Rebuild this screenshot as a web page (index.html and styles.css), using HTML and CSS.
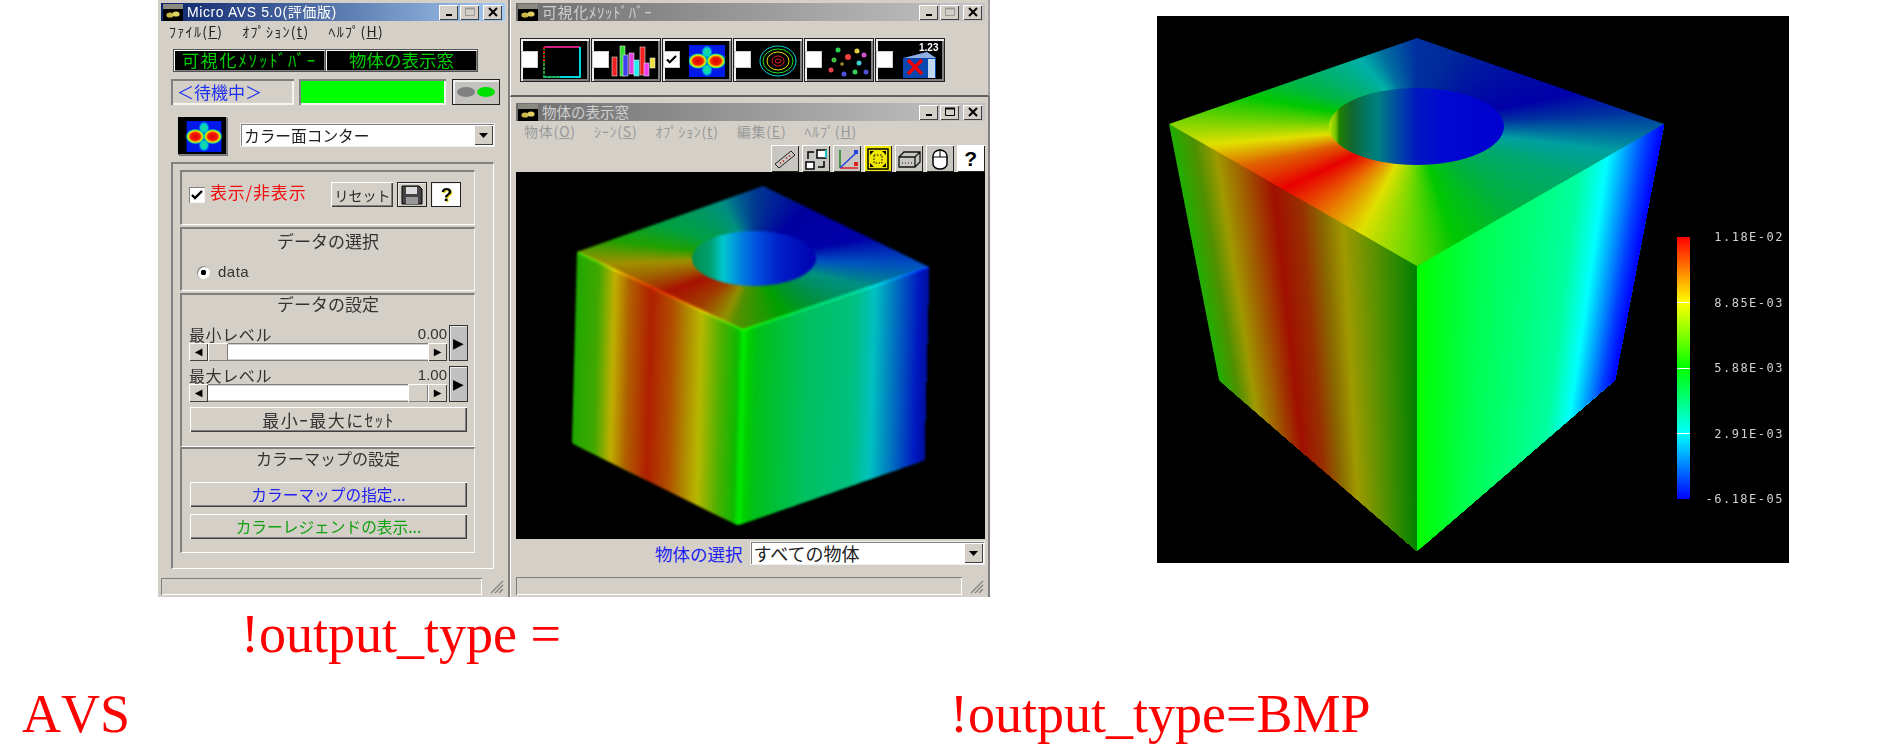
FILE: index.html
```html
<!DOCTYPE html>
<html lang="ja">
<head>
<meta charset="utf-8">
<title>Micro AVS output_type</title>
<link rel="stylesheet" href="styles.css">
<script src="script.js" defer></script>
</head>
<body>
<svg class="defs" width="0" height="0" aria-hidden="true">
  <defs>
    <radialGradient id="hot">
      <stop offset="0" stop-color="#e00000"/><stop offset=".5" stop-color="#f02000"/><stop offset=".72" stop-color="#f0e000"/><stop offset=".86" stop-color="#20e080"/><stop offset="1" stop-color="#00a0f0" stop-opacity="0"/>
    </radialGradient>
    <radialGradient id="cool">
      <stop offset="0" stop-color="#20e080"/><stop offset=".6" stop-color="#00d0d0"/><stop offset="1" stop-color="#0060f0" stop-opacity="0"/>
    </radialGradient>
    <symbol id="heat" viewBox="0 0 36 32">
      <rect width="36" height="32" fill="#0018e8"/>
      <ellipse cx="18" cy="7" rx="6" ry="7" fill="url(#cool)"/>
      <ellipse cx="18" cy="25" rx="6" ry="7" fill="url(#cool)"/>
      <ellipse cx="9" cy="16" rx="10" ry="8" fill="url(#hot)"/>
      <ellipse cx="27" cy="16" rx="10" ry="8" fill="url(#hot)"/>
    </symbol>
    <symbol id="app" viewBox="0 0 20 17">
      <rect width="20" height="17" fill="#8a8a80"/>
      <rect y="5" width="20" height="12" fill="#000"/>
      <ellipse cx="7" cy="11" rx="3.6" ry="2.6" fill="#c8b848"/>
      <ellipse cx="13" cy="10" rx="3.6" ry="2.6" fill="#e0d060"/>
    </symbol>
    <symbol id="min" viewBox="0 0 10 10"><rect x="2" y="7" width="6" height="2" fill="#000"/></symbol>
    <symbol id="max" viewBox="0 0 12 10"><path d="M1.5 1.5h9v7h-9z" fill="none" stroke="currentColor"/><path d="M1 1.5h10" stroke="currentColor" stroke-width="2"/></symbol>
    <symbol id="close" viewBox="0 0 12 10"><path d="M2 1l8 8M10 1l-8 8" stroke="#000" stroke-width="2"/></symbol>
    <symbol id="down" viewBox="0 0 9 5"><path d="M0 0h9L4.500 5z" fill="#000"/></symbol>
    <symbol id="floppy" viewBox="0 0 22 20"><path d="M1 1h17l3 3v15H1z" fill="#444" stroke="#000"/><rect x="5" y="2" width="11" height="7" fill="#ddd"/><rect x="5" y="12" width="12" height="7" fill="#999"/></symbol>
  </defs>
</svg>

<main class="stage">
  <section class="win win-main">
    <header class="title title-on">
      <svg class="app-icon"><use href="#app"/></svg>
      <span class="title-text">Micro AVS 5.0(評価版)</span>
      <span class="caps">
        <span class="cap cap-min"><svg><use href="#min"/></svg></span>
        <span class="cap dim"><svg><use href="#max"/></svg></span>
        <span class="cap cap-x"><svg><use href="#close"/></svg></span>
      </span>
    </header>
    <nav class="menu menu-main">
      <span>ﾌｧｲﾙ(<u>F</u>)</span><span>ｵﾌﾟｼｮﾝ(<u>t</u>)</span><span>ﾍﾙﾌﾟ(<u>H</u>)</span>
    </nav>
    <div class="modes">
      <span class="mode mode-a">可視化ﾒｿｯﾄﾞﾊﾞｰ</span>
      <span class="mode">物体の表示窓</span>
    </div>
    <div class="status-row">
      <span class="waiting">＜待機中＞</span>
      <span class="meter"><i></i></span>
      <span class="lights"><i class="off"></i><i class="on"></i></span>
    </div>
    <div class="plot-row">
      <span class="plot-icon"><svg><use href="#heat"/></svg></span>
      <div class="select select-plot"><span>カラー面コンター</span><b class="drop"><svg><use href="#down"/></svg></b></div>
    </div>
    <div class="group">
      <div class="sub sub-show">
        <span class="check checked"><svg viewBox="0 0 12 10"><path d="M1 5l3 3 7-7" fill="none" stroke="#000" stroke-width="2.400"/></svg></span>
        <span class="show-label">表示/非表示</span>
        <span class="btn btn-reset">リセット</span>
        <span class="btn btn-icon"><svg class="floppy"><use href="#floppy"/></svg></span>
        <span class="btn btn-icon btn-help">?</span>
      </div>
      <div class="sub sub-data">
        <h3 class="sub-title title-lg">データの選択</h3>
        <div class="radio-row"><span class="radio"></span><span class="radio-text">data</span></div>
      </div>
      <div class="sub sub-levels">
        <h3 class="sub-title title-lg">データの設定</h3>
        <div class="slider">
          <div class="slider-main">
            <div class="slider-head"><span>最小レベル</span><span>0.00</span></div>
            <div class="scroll"><b class="sb">◀</b><b class="thumb"></b><i class="track"></i><b class="sb">▶</b></div>
          </div>
          <span class="step">▶</span>
        </div>
        <div class="slider">
          <div class="slider-main">
            <div class="slider-head"><span>最大レベル</span><span>1.00</span></div>
            <div class="scroll"><b class="sb">◀</b><i class="track"></i><b class="thumb"></b><b class="sb">▶</b></div>
          </div>
          <span class="step">▶</span>
        </div>
        <span class="btn wide wide-set">最小ｰ最大にｾｯﾄ</span>
      </div>
      <div class="sub sub-map">
        <h3 class="sub-title">カラーマップの設定</h3>
        <span class="btn wide blue">カラーマップの指定...</span>
        <span class="btn wide green">カラーレジェンドの表示...</span>
      </div>
    </div>
    <footer class="foot foot-main"><span class="foot-box"></span><svg class="grip" viewBox="0 0 15 15"><path d="M14 2L2 14M14 6l-8 8M14 10l-4 4" stroke="#808080" stroke-width="1.200"/></svg></footer>
  </section>

  <section class="win win-bar">
    <header class="title title-off">
      <svg class="app-icon"><use href="#app"/></svg>
      <span class="title-text title-method">可視化ﾒｿｯﾄﾞﾊﾞｰ</span>
      <span class="caps">
        <span class="cap cap-min"><svg><use href="#min"/></svg></span>
        <span class="cap dim"><svg><use href="#max"/></svg></span>
        <span class="cap cap-x"><svg><use href="#close"/></svg></span>
      </span>
    </header>
    <div class="methods">
      <span class="method"><i class="mcheck"></i><svg viewBox="0 0 66 39"><path d="M21 6h36" stroke="#d02080" stroke-width="2"/><path d="M57 6v30H21" fill="none" stroke="#00d8d8" stroke-width="2"/><path d="M21 6v30h16" fill="none" stroke="#20a040" stroke-width="2" stroke-dasharray="3 1"/><path d="M21 6v16" stroke="#e00000" stroke-width="2" stroke-dasharray="2 2"/></svg></span>
      <span class="method"><i class="mcheck"></i><svg viewBox="0 0 66 39"><g stroke="#ddd" stroke-width=".6"><rect x="18" y="16" width="5" height="19" fill="#f02020"/><rect x="26" y="5" width="5" height="30" fill="#30e030"/><rect x="29" y="14" width="5" height="21" fill="#4040f0"/><rect x="35" y="12" width="5" height="21" fill="#e040e0"/><rect x="40" y="19" width="5" height="16" fill="#20f0f0"/><rect x="46" y="6" width="5" height="28" fill="#f02020"/><rect x="50" y="22" width="5" height="13" fill="#f040f0"/><rect x="56" y="17" width="5" height="10" fill="#f0e040"/></g></svg></span>
      <span class="method"><i class="mcheck checked-m"><svg viewBox="0 0 12 10"><path d="M1 5l3 3 7-7" fill="none" stroke="#000" stroke-width="2.400"/></svg></i><svg viewBox="0 0 66 39"><use href="#heat" x="24" y="4" width="36" height="32"/></svg></span>
      <span class="method"><i class="mcheck"></i><svg viewBox="0 0 66 39"><g fill="none" stroke-width="1"><ellipse cx="42" cy="20" rx="18" ry="15" stroke="#00d8d8"/><ellipse cx="42" cy="20" rx="15" ry="12" stroke="#20e020"/><ellipse cx="42" cy="20" rx="11" ry="9" stroke="#e0e000"/><ellipse cx="42" cy="20" rx="6" ry="5" stroke="#e02020"/><ellipse cx="42" cy="20" rx="3" ry="2" stroke="#e02020"/></g></svg></span>
      <span class="method"><i class="mcheck"></i><svg viewBox="0 0 66 39"><circle cx="31" cy="9" r="2.500" fill="#30d050"/><circle cx="50" cy="10" r="2.500" fill="#e0d040"/><circle cx="41" cy="16" r="3" fill="#f04040"/><circle cx="57" cy="14" r="2.500" fill="#d050d0"/><circle cx="27" cy="19" r="2.500" fill="#40c040"/><circle cx="35" cy="23" r="1.800" fill="#a09020"/><circle cx="52" cy="22" r="2.500" fill="#40d0d0"/><circle cx="24" cy="29" r="2.500" fill="#e04050"/><circle cx="37" cy="33" r="2.500" fill="#5050e0"/><circle cx="48" cy="31" r="2.500" fill="#30d050"/><circle cx="59" cy="31" r="2.500" fill="#5050d0"/></svg></span>
      <span class="method"><i class="mcheck"></i><svg viewBox="0 0 66 39"><path d="M25 17l24-6 9 6v20H25z" fill="#0848b0"/><path d="M49 11l9 6-32 0z" fill="#90b0e0"/><path d="M50 18h7v19h-7z" fill="#c0d8f0"/><path d="M30 19l14 14M44 19L30 33" stroke="#f00000" stroke-width="3.500"/><text class="num" x="41" y="10">1.23</text></svg></span>
    </div>
  </section>

  <section class="win win-view">
    <header class="title title-off">
      <svg class="app-icon"><use href="#app"/></svg>
      <span class="title-text">物体の表示窓</span>
      <span class="caps">
        <span class="cap cap-min"><svg><use href="#min"/></svg></span>
        <span class="cap"><svg><use href="#max"/></svg></span>
        <span class="cap cap-x"><svg><use href="#close"/></svg></span>
      </span>
    </header>
    <nav class="menu menu-view">
      <span>物体(<u>O</u>)</span><span>ｼｰﾝ(<u>S</u>)</span><span>ｵﾌﾟｼｮﾝ(<u>t</u>)</span><span>編集(<u>E</u>)</span><span>ﾍﾙﾌﾟ(<u>H</u>)</span>
    </nav>
    <div class="tools">
      <span class="tool"><svg viewBox="0 0 26 24"><path d="M3 17L19 4l4 4L7 21z" fill="none" stroke="#222"/><path d="M8 15l1 2M11 13l1 2M14 10l1 2M17 8l1 2" stroke="#c02020"/></svg></span>
      <span class="tool"><svg viewBox="0 0 26 24"><rect x="14" y="3" width="9" height="8" fill="#fff" stroke="#000" stroke-width="1.500"/><path d="M23 3v8" stroke="#20c0c0" stroke-width="2"/><rect x="3" y="15" width="8" height="7" fill="#fff" stroke="#000" stroke-width="1.500"/><path d="M5 12V5h6M15 20h6v-6" fill="none" stroke="#000" stroke-width="1.500"/></svg></span>
      <span class="tool"><svg viewBox="0 0 26 24"><path d="M6 21V3" stroke="#208020" stroke-width="1.500"/><path d="M6 21h18" stroke="#e02020" stroke-width="1.500"/><path d="M6 21L22 6" stroke="#2040e0" stroke-width="1.500"/><rect x="20" y="3" width="4" height="4" fill="#2040e0"/><rect x="20" y="15" width="4" height="4" fill="#e02020"/></svg></span>
      <span class="tool tool-yellow"><svg viewBox="0 0 26 24"><rect x="3" y="2" width="20" height="20" fill="none" stroke="#000" stroke-width="1.500"/><path d="M5 4h4l-4 4zM21 4h-4l4 4zM5 20h4l-4-4zM21 20h-4l4-4z" fill="#000"/><rect x="9" y="8" width="8" height="8" fill="none" stroke="#000" stroke-dasharray="1.500 1.500"/></svg></span>
      <span class="tool"><svg viewBox="0 0 26 24"><path d="M3 10l5-5h16v10l-5 5H3zM3 10h16v10M19 10l5-5" fill="none" stroke="#111" stroke-width="1.300"/><path d="M6 16h1M9 16h1M12 16h1M15 16h1" stroke="#111"/></svg></span>
      <span class="tool"><svg viewBox="0 0 26 24"><path d="M6 9a7 6 0 0 1 14 0v8a7 5 0 0 1-14 0z" fill="#fff" stroke="#000" stroke-width="1.500"/><path d="M6 10h14M13 2v8" stroke="#000"/></svg></span>
      <span class="tool tool-help">?</span>
    </div>
    <div class="plot plot-small"><canvas id="cube-small" width="469" height="367"></canvas></div>
    <div class="pick-row">
      <span class="pick-label">物体の選択</span>
      <div class="select select-pick"><span>すべての物体</span><b class="drop"><svg><use href="#down"/></svg></b></div>
    </div>
    <footer class="foot foot-view"><span class="foot-box"></span><svg class="grip" viewBox="0 0 15 15"><path d="M14 2L2 14M14 6l-8 8M14 10l-4 4" stroke="#808080" stroke-width="1.200"/></svg></footer>
  </section>

  <figure class="plot plot-big">
    <canvas id="cube-big" width="632" height="547"></canvas>
    <div class="legend">
      <div class="legend-bar"><i></i><i></i><i></i></div>
      <div class="legend-labels"><span>1.18E-02</span><span>8.85E-03</span><span>5.88E-03</span><span>2.91E-03</span><span>-6.18E-05</span></div>
    </div>
  </figure>

  <p class="cap-text cap-a">!output_type =</p>
  <p class="cap-text cap-b">AVS</p>
  <p class="cap-text cap-c">!output_type=BMP</p>
</main>
</body>
</html>
```

FILE: styles.css
```css
* { box-sizing: border-box; }
html, body { margin: 0; background: #fff; overflow: hidden; }
body { font-family: "Noto Sans CJK JP", "Liberation Sans", sans-serif; color: #2a2a2a; }
h3, p, figure { margin: 0; font-weight: 400; }
.defs { position: absolute; }
.stage { position: relative; width: 1882px; height: 753px; }

/* windows on the desktop */
.win { position: absolute; background: #d4d0c8; display: flex; flex-direction: column; filter: blur(.35px); }
.win-main { left: 158px; top: 0; width: 352px; height: 597px; padding: 3px 3px 0; border-right: 2px solid #808080; }
.win-bar { left: 510px; top: 0; width: 480px; height: 97px; padding: 3px 3px 0 5px; border-right: 2px solid #a0a0a0; border-left: 1px solid #fff; border-bottom: 2px solid #606060; }
.win-view { left: 510px; top: 97px; width: 480px; height: 500px; padding: 6px 3px 0 5px; border-right: 2px solid #808080; border-left: 1px solid #fff; }

.title { height: 18px; flex: none; display: flex; align-items: center; padding-left: 2px; color: #fff; font-size: 13px; }
.title-on { background: linear-gradient(90deg, #0a246a, #a6caf0); font-family: "Liberation Sans", "Noto Sans CJK JP", sans-serif; }
.title-off { background: linear-gradient(90deg, #6e6e6e, #c4c4c4); color: #cfcfcf; }
.app-icon { width: 20px; height: 17px; flex: none; }
.title-text { margin-left: 4px; letter-spacing: .6px; font-size: 14px; line-height: 18px; white-space: nowrap; }
.title-off .title-text { font-size: 14.500px; letter-spacing: 0; }
.title-off .title-method { font-size: 15px; letter-spacing: .6px; }
.caps { margin-left: auto; display: flex; gap: 2px; padding-right: 3px; }
.cap { width: 19px; height: 15px; background: #d4d0c8; box-shadow: inset 1px 1px #fff, inset -1px -1px #404040; display: flex; align-items: center; justify-content: center; color: #000; }
.cap svg { width: 12px; height: 10px; }
.cap.dim { color: #999; }
.cap-x { margin-left: 2px; }

.menu { height: 20px; flex: none; display: flex; font-size: 14px; line-height: 20px; color: #222; white-space: nowrap; }
.menu-main { padding-left: 8px; gap: 19px; margin-bottom: 9px; letter-spacing: 1.300px; }
.menu-view { height: 24px; padding-left: 8px; gap: 18px; color: #999; letter-spacing: .8px; }

.modes { display: flex; gap: 1px; margin-left: 13px; height: 21px; flex: none; }
.mode { width: 151px; height: 21px; background: #000; color: #00d000; font-size: 17.500px; line-height: 20px; text-align: center; white-space: nowrap; box-shadow: inset 1px 1px #fff, inset -1px -1px #808080, 0 0 0 1px #555; }
.mode-a { font-size: 17px; letter-spacing: 1.800px; }

.status-row { display: flex; height: 26px; margin: 8px 0 0 10px; flex: none; }
.waiting { width: 123px; box-shadow: inset 2px 2px #808080, inset -2px -2px #f4f4f0; color: #2030f0; font-size: 17px; line-height: 25px; padding-left: 6px; white-space: nowrap; }
.meter { width: 147px; margin-left: 5px; padding: 2px; box-shadow: inset 2px 2px #808080, inset -2px -2px #f4f4f0; display: flex; }
.meter i { flex: 1; background: #00ff00; }
.lights { width: 48px; margin-left: 6px; background: #c4c2bc; box-shadow: inset 1px 1px #222, inset -1px -1px #222, inset 3px 3px #eee; display: flex; align-items: center; justify-content: center; gap: 2px; }
.lights i { width: 18px; height: 10px; border-radius: 50%; }
.lights .off { background: #808080; }
.lights .on { background: #00e000; }

.plot-row { display: flex; align-items: flex-start; margin: 12px 0 0 17px; height: 38px; flex: none; }
.plot-icon { width: 49px; height: 38px; background: #000; padding: 4px 5px 3px 8px; box-shadow: inset -1px -1px #808080, 1px 1px #777; display: block; }
.plot-icon svg { width: 36px; height: 31px; display: block; }
.select { display: flex; align-items: center; background: #fff; box-shadow: inset 1px 1px #808080, 0 0 0 1px #f0f0f0; font-size: 15.700px; color: #222; white-space: nowrap; }
.select span { flex: 1; padding-left: 3px; }
.select-plot { width: 253px; height: 22px; margin: 7px 0 0 14px; }
.drop { width: 19px; height: 20px; margin-right: 1px; background: #d4d0c8; box-shadow: inset 1px 1px #fff, inset -1px -1px #404040; display: flex; align-items: center; justify-content: center; }
.drop svg { width: 9px; height: 5px; }

.group { margin: 7px 0 0 10px; width: 323px; height: 407px; flex: none; padding: 6px 0 0 7px; border-left: 2px solid #808080; border-top: 2px solid #808080; border-right: 1px solid #fff; border-bottom: 1px solid #fff; }
.sub { width: 295px; border-left: 2px solid #808080; border-top: 2px solid #808080; border-bottom: 1px solid #fff; border-right: 1px solid #f4f4f0; }
.sub-title { font-size: 16px; line-height: 24px; text-align: center; color: #333; white-space: nowrap; }
.title-lg { font-size: 17px; }

.sub-show { height: 55px; display: flex; align-items: flex-start; padding: 10px 0 0 7px; margin-bottom: 2px; }
.check { width: 16px; height: 16px; margin-top: 5px; background: #fff; box-shadow: inset 1px 1px #808080, inset -1px -1px #f4f4f0; display: flex; align-items: center; justify-content: center; flex: none; }
.check svg { width: 12px; height: 10px; }
.show-label { margin-left: 5px; margin-top: -2px; font-size: 17px; line-height: 24px; color: #f01010; white-space: nowrap; letter-spacing: .8px; }
.btn { background: #d4d0c8; box-shadow: inset 1px 1px #fff, inset -1px -1px #404040, inset -2px -2px #808080; display: flex; align-items: center; justify-content: center; white-space: nowrap; }
.btn-reset { width: 62px; height: 25px; margin-left: 25px; font-size: 14px; }
.btn-icon { width: 30px; height: 25px; margin-left: 4px; box-shadow: inset 0 0 0 1px #222, inset 2px 2px #eee; }
.floppy { width: 22px; height: 20px; }
.btn-help { background: #fff; color: #000; font: 700 19px/25px "Liberation Sans", sans-serif; text-shadow: 1px 1px #e8d800; }

.sub-data { height: 64px; margin-bottom: 2px; }
.radio-row { display: flex; align-items: center; margin: 9px 0 0 15px; height: 20px; }
.radio { width: 13px; height: 13px; border-radius: 50%; background: radial-gradient(circle, #000 0 2.500px, #fff 3px); box-shadow: inset 1px 1px #808080; }
.radio-text { margin-left: 8px; font: 15px/20px "Liberation Sans", sans-serif; letter-spacing: .5px; color: #333; }

.sub-levels { height: 154px; padding: 0 0 0 7px; }
.slider { display: flex; height: 36px; margin-bottom: 5px; width: 279px; gap: 2px; }
.sub-levels .sub-title { margin: -3px 0 9px -7px; }
.slider-main { width: 258px; display: flex; flex-direction: column; }
.slider-head { height: 18px; display: flex; justify-content: space-between; font-size: 16px; line-height: 18px; color: #333; white-space: nowrap; letter-spacing: .6px; }
.slider-head span:last-child { letter-spacing: 0; font-size: 15px; font-family: "Liberation Sans", sans-serif; }
.scroll { height: 18px; display: flex; box-shadow: inset 0 1px #808080, inset 0 -1px #808080; }
.track { flex: 1; background: #fff; margin: 2px 0; }
.thumb { width: 20px; background: #d4d0c8; box-shadow: inset 1px 1px #fff, inset -1px -1px #808080; }
.sb { width: 19px; background: #d4d0c8; font: 10px/18px "DejaVu Sans", sans-serif; text-align: center; box-shadow: inset 1px 1px #fff, inset -1px -1px #404040; color: #000; }
.step { width: 19px; height: 36px; background: #c0c0c0; box-shadow: inset 0 0 0 1px #333, inset 2px 2px #eee; font: 14px/36px "DejaVu Sans", sans-serif; text-align: center; color: #000; }
.wide { width: 277px; height: 25px; font-size: 15.700px; color: #333; }
.wide-set { margin: 3px 0 0 1px; font-size: 17px; letter-spacing: 1.500px; }

.sub-map { height: 106px; padding: 0 0 0 8px; }
.sub-map .sub-title { margin: -4px 0 7px -8px; height: 30px; line-height: 26px; }
.sub-map .wide + .wide { margin-top: 7px; }
.blue { color: #2020f0; }
.green { color: #10a010; }

.foot { height: 17px; flex: none; display: flex; align-items: flex-end; justify-content: space-between; }
.foot-main { margin-top: 9px; }
.foot-box { height: 17px; box-shadow: inset 1px 1px #808080, inset -1px -1px #fff; }
.foot-main .foot-box { width: 321px; }
.grip { width: 15px; height: 15px; margin-bottom: 1px; margin-right: 1px; }

.methods { display: flex; gap: 3px; margin: 18px 0 0 5px; }
.method { position: relative; width: 68px; height: 42px; background: #000; padding: 2px 0 0 2px; box-shadow: inset 2px 2px #eee, inset -2px -2px #808080, 0 0 0 1px #222; }
.method > svg { display: block; width: 66px; height: 39px; }
.mcheck { position: absolute; left: 1px; top: 13px; width: 15px; height: 15px; background: #fff; box-shadow: 0 0 0 1px #ccc; display: flex; align-items: center; justify-content: center; }
.mcheck svg { width: 11px; height: 9px; }
.num { fill: #fff; font: 700 10px "Liberation Sans", sans-serif; }

.tools { display: flex; justify-content: flex-end; gap: 2.500px; height: 27px; flex: none; }
.tool { width: 28.500px; height: 27px; background: #c8c6c0; box-shadow: inset 1px 1px #fff, inset -1px -1px #222; display: flex; align-items: center; justify-content: center; }
.tool svg { width: 26px; height: 24px; }
.tool-yellow { background: #f0e800; }
.tool-help { background: #fff; color: #000; font: 700 21px/27px "Liberation Sans", sans-serif; }

.plot { position: relative; background: #000; }
.plot canvas { display: block; }
.plot-small { width: 469px; height: 367px; flex: none; }
.plot-small canvas { filter: blur(.8px); }
.plot-big { position: absolute; left: 1157px; top: 16px; width: 632px; height: 547px; }

.legend { position: absolute; left: 520px; top: 214px; width: 107px; height: 276px; display: flex; justify-content: space-between; }
.legend-bar { width: 13px; margin: 7px 0; height: 262px; background: linear-gradient(#ff0000, #ffff00 25%, #00ff00 50%, #00ffff 75%, #0000ff); display: flex; flex-direction: column; justify-content: space-evenly; }
.legend-bar i { height: 1px; background: #fff; }
.legend-labels { display: flex; flex-direction: column; justify-content: space-between; align-items: flex-end; font: 12px/14px "DejaVu Sans Mono", monospace; letter-spacing: 1.500px; color: #d0d0d0; }

.pick-row { display: flex; align-items: center; height: 22px; margin-top: 3px; flex: none; }
.pick-label { margin-left: 139px; font-size: 17.500px; color: #2020f0; white-space: nowrap; }
.select-pick { width: 233px; height: 22px; margin-left: 8px; font-size: 18px; }
.foot-view { margin-top: 13px; height: 18px; }
.foot-view .foot-box { width: 446px; height: 18px; }

.cap-text { position: absolute; font: 54px/60px "Liberation Serif", serif; color: #ff0000; font-kerning: none; white-space: nowrap; }
.cap-a { left: 241px; top: 604px; }
.cap-b { left: 22px; top: 684px; }
.cap-c { left: 950px; top: 684px; }
```

FILE: script.js
```js
function rgb(hex) {
  return [1, 3, 5].map(function (i) { return parseInt(hex.substr(i, 2), 16); });
}
function colorAt(stops, u) {
  for (var i = 1; i < stops.length; i++) {
    if (u <= stops[i][0]) {
      var a = stops[i - 1], b = stops[i], t = (u - a[0]) / (b[0] - a[0]);
      var ca = rgb(a[1]), cb = rgb(b[1]);
      return "rgb(" + ca.map(function (v, k) { return Math.round(v + (cb[k] - v) * t); }).join(",") + ")";
    }
  }
  return stops[stops.length - 1][1];
}
function mix(p, q, t) { return [p[0] + (q[0] - p[0]) * t, p[1] + (q[1] - p[1]) * t]; }
function poly(ctx, pts) {
  ctx.beginPath();
  pts.forEach(function (p, i) { if (i) ctx.lineTo(p[0], p[1]); else ctx.moveTo(p[0], p[1]); });
  ctx.closePath();
}
/* Each strip runs to the far edge of the face, so later strips paint over earlier ones without seams. */
function face(ctx, a, b, d, c, stops) {
  var n = 240;
  for (var i = 0; i < n; i++) {
    ctx.fillStyle = colorAt(stops, (i + 0.5) / n);
    poly(ctx, [mix(a, b, i / n), b, c, mix(d, c, i / n)]);
    ctx.fill();
  }
}
function glow(ctx, p, q, stops, alpha) {
  var n = 120;
  ctx.save();
  ctx.globalCompositeOperation = "lighter";
  ctx.globalAlpha = alpha;
  ctx.lineWidth = 2.5;
  for (var i = 0; i < n; i++) {
    var m0 = mix(p, q, i / n), m1 = mix(p, q, (i + 1) / n);
    ctx.strokeStyle = colorAt(stops, (i + 0.5) / n);
    ctx.beginPath();
    ctx.moveTo(m0[0], m0[1]);
    ctx.lineTo(m1[0], m1[1]);
    ctx.stroke();
  }
  ctx.restore();
}
function drawCube(id, g, s) {
  var ctx = document.getElementById(id).getContext("2d");
  face(ctx, g.L, g.F, g.BL, g.B, s.left);
  face(ctx, g.F, g.R, g.B, g.BR, s.right);
  ctx.save();
  poly(ctx, [g.A, g.R, g.F, g.L]);
  ctx.clip();
  var con = ctx.createConicGradient(-Math.PI / 2, g.H[0], g.H[1]);
  s.top.forEach(function (st) { con.addColorStop(st[0] / 360, st[1]); });
  ctx.fillStyle = con;
  ctx.fillRect(0, 0, ctx.canvas.width, ctx.canvas.height);
  ctx.restore();
  var lin = ctx.createLinearGradient(g.H[0] - g.rx, 0, g.H[0] + g.rx, 0);
  s.hole.forEach(function (st) { lin.addColorStop(st[0], st[1]); });
  ctx.fillStyle = lin;
  ctx.beginPath();
  ctx.ellipse(g.H[0], g.H[1], g.rx, g.ry, 0, 0, Math.PI * 2);
  ctx.fill();
  if (s.glow) {
    glow(ctx, g.L, g.F, s.left, s.glow);
    glow(ctx, g.F, g.R, s.right, s.glow);
  }
}
drawCube("cube-big",
  { A: [260, 22], L: [12, 108], R: [507, 108], F: [260, 250], BL: [62, 364], BR: [458, 364], B: [260, 535], H: [259.5, 110.5], rx: 87.5, ry: 38.5 },
  {
    left: [[0, "#20b000"], [.1, "#509000"], [.19, "#a09a00"], [.3, "#a05a00"], [.42, "#a01000"], [.53, "#983000"], [.62, "#8a6a00"], [.7, "#a09a00"], [.85, "#4f9000"], [1, "#008000"]],
    right: [[0, "#00ff00"], [.25, "#00ff50"], [.5, "#00ff80"], [.65, "#00ffa0"], [.77, "#00ffff"], [.85, "#00a0ff"], [.93, "#0040ff"], [1, "#0000ff"]],
    top: [[0, "#0030a0"], [23, "#002a9a"], [78, "#0000a8"], [86, "#0030a0"], [97, "#00a0a0"], [107, "#00a870"], [131, "#00b040"], [162, "#00c800"], [184, "#70d800"], [208, "#e0e000"], [225, "#e88000"], [245, "#e80000"], [257, "#e06000"], [265, "#e0e000"], [273, "#60d000"], [280, "#00c800"], [288, "#00b840"], [300, "#00b070"], [320, "#00b0a8"], [335, "#0070a0"], [360, "#0030a0"]],
    hole: [[0, "#c0e800"], [.04, "#70c000"], [.06, "#208000"], [.13, "#106830"], [.22, "#007868"], [.28, "#008080"], [.38, "#0050a0"], [.5, "#0018c0"], [.65, "#0008d0"], [1, "#0000d0"]]
  });
drawCube("cube-small",
  { A: [247, 14], L: [61, 80], R: [413, 95], F: [227, 158], BL: [56, 271], BR: [408, 288], B: [222, 353], H: [238, 86.5], rx: 62, ry: 27.5 },
  {
    glow: .3,
    left: [[0, "#20a800"], [.13, "#40a800"], [.23, "#c0b000"], [.32, "#b06000"], [.45, "#b02000"], [.58, "#b05000"], [.67, "#b08a00"], [.75, "#b8b800"], [.87, "#50b000"], [.97, "#10b800"], [1, "#00e800"]],
    right: [[0, "#00f000"], [.03, "#00d000"], [.08, "#00c018"], [.35, "#00c060"], [.6, "#00c080"], [.71, "#00c0c0"], [.85, "#0060c0"], [.95, "#0018c0"], [1, "#0010a0"]],
    top: [[0, "#003a90"], [46, "#0000a0"], [80, "#0000a8"], [92, "#0050c0"], [104, "#009080"], [125, "#009040"], [153, "#00a000"], [195, "#509000"], [206, "#909000"], [228, "#a04000"], [249, "#a81000"], [258, "#a05000"], [268, "#a09000"], [277, "#20a000"], [290, "#00a040"], [330, "#009080"], [345, "#006090"], [360, "#003a90"]],
    hole: [[0, "#009050"], [.15, "#00a070"], [.25, "#00c8d0"], [.4, "#0080e0"], [.52, "#0050e0"], [.7, "#0020c8"], [1, "#0000b0"]]
  });
```
